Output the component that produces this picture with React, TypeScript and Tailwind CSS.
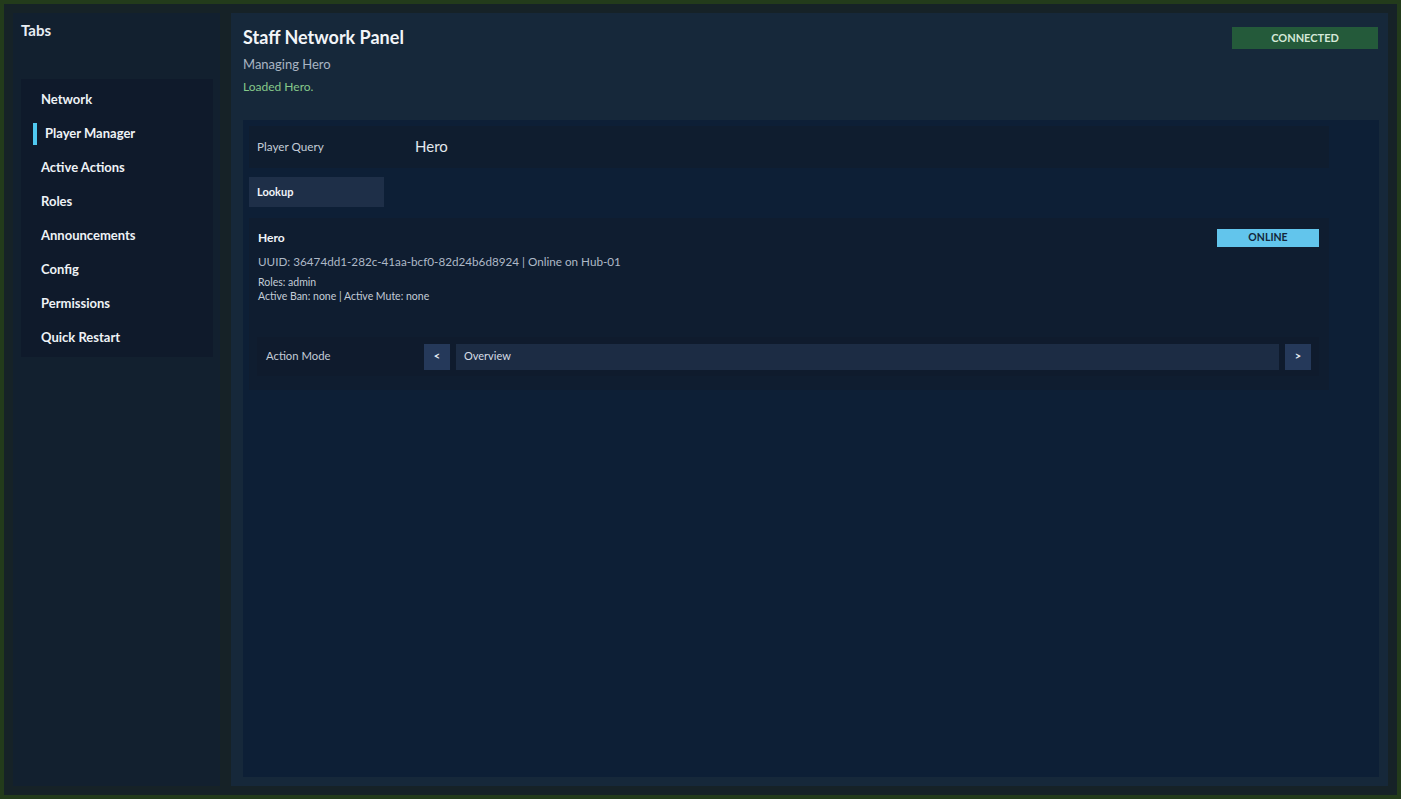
import React, { useState } from 'react';

const tabs = [
  'Network',
  'Player Manager',
  'Active Actions',
  'Roles',
  'Announcements',
  'Config',
  'Permissions',
  'Quick Restart',
];

const Sidebar = ({ active, onSelect }: { active: string; onSelect: (t: string) => void }) => (
  <aside className="w-[207px] shrink-0 bg-[#12202f] pt-2 pl-2 pr-[7px]">
    <h2 className="mt-[-1px] text-[15px] font-bold leading-[20px] text-[#e8edf3]">Tabs</h2>
    <nav className="mt-[39px] bg-[#0f1a2b] pt-[4px] pb-[2px]">
      {tabs.map((tab) => {
        const isActive = tab === active;
        return (
          <button
            key={tab}
            onClick={() => onSelect(tab)}
            className="flex h-[34px] w-full items-center text-left text-[13px] font-bold text-[#eef2f6]"
          >
            {isActive ? (
              <>
                <span className="ml-3 h-[22px] w-1 bg-[#4fc8f0]" />
                <span className="ml-2">{tab}</span>
              </>
            ) : (
              <span className="ml-5">{tab}</span>
            )}
          </button>
        );
      })}
    </nav>
  </aside>
);

const PlayerCard = () => (
  <div className="mt-[11px] bg-[#0f1d30] pt-[11px] pb-[14px] pl-2 pr-[10px]">
    <div className="flex items-start justify-between">
      <div className="pt-[1px] pl-[1px]">
        <div className="text-[12px] font-bold leading-[16px] text-[#f1f4f8]">Hero</div>
        <div className="mt-[7px] text-[11.7px] leading-[16px] text-[#aeb9c7]">
          UUID: 36474dd1-282c-41aa-bcf0-82d24b6d8924 | Online on Hub-01
        </div>
        <div className="mt-[6px] text-[10.5px] leading-[14px] text-[#c3ccd7]">Roles: admin</div>
        <div className="text-[10.5px] leading-[14px] text-[#c3ccd7]">Active Ban: none | Active Mute: none</div>
      </div>
      <span className="flex h-[18px] w-[102px] items-center justify-center bg-[#62c5ec] text-[10.5px] font-bold text-[#13263a]">
        ONLINE
      </span>
    </div>

    {/* Action mode selector */}
    <div className="mt-[34px] flex h-[39px] items-center bg-[#0f1b2d] pl-[9px] pr-2">
      <span className="w-[158px] text-[11.3px] text-[#c3ccd7]">Action Mode</span>
      <button className="flex h-[26px] w-[26px] items-center justify-center bg-[#25395a] text-[11px] font-bold text-[#e6ecf3]">
        &lt;
      </button>
      <div className="mx-[6px] flex h-[26px] flex-1 items-center bg-[#1c2c44] px-2 text-[11px] text-[#d5dce5]">
        Overview
      </div>
      <button className="flex h-[26px] w-[26px] items-center justify-center bg-[#25395a] text-[11px] font-bold text-[#e6ecf3]">
        &gt;
      </button>
    </div>
  </div>
);

export default function App() {
  const [active, setActive] = useState('Player Manager');
  const [query, setQuery] = useState('Hero');

  return (
    <div
      className="h-[799px] w-[1401px] overflow-hidden bg-[#233b1b] p-1"
      style={{ fontFamily: 'Lato, "Noto Sans", "Liberation Sans", sans-serif' }}
    >
      <div className="flex h-full gap-[11px] bg-[#162227] p-[9px]">
        <Sidebar active={active} onSelect={setActive} />

        <main className="flex flex-1 flex-col bg-[#16283a] pt-3 pl-3 pr-[9px] pb-[9px]">
          {/* Header */}
          <div className="flex items-start justify-between">
            <div>
              <h1 className="text-[18px] font-bold leading-[24px] text-[#f2f5f8]">Staff Network Panel</h1>
              <p className="mt-[6px] text-[13px] leading-[18px] text-[#a9b5c3]">Managing Hero</p>
              <p className="mt-[6px] text-[12px] leading-[16px] text-[#86c98a]">Loaded Hero.</p>
            </div>
            <span className="mt-[2px] mr-[1px] flex h-[22px] w-[146px] items-center justify-center bg-[#245a3a] text-[11px] font-bold text-[#d5e8d8]">
              CONNECTED
            </span>
          </div>

          {/* Content */}
          <div className="mt-[25px] flex-1 bg-[#0d1f36] pt-[6px] pl-[6px] pr-[50px]">
            <div className="flex h-[42px] items-center bg-[#0f1d2f]">
              <span className="w-[166px] pl-2 text-[11.7px] text-[#c3ccd7]">Player Query</span>
              <input
                value={query}
                onChange={(e) => setQuery(e.target.value)}
                className="mt-[-2px] flex-1 bg-transparent text-[15px] text-[#e3e8ee] outline-none"
              />
            </div>

            <button className="mt-[9px] flex h-[30px] w-[135px] items-center bg-[#1e2f48] pl-2 text-[11px] font-bold text-[#f1f4f8]">
              Lookup
            </button>

            <PlayerCard />
          </div>
        </main>
      </div>
    </div>
  );
}
